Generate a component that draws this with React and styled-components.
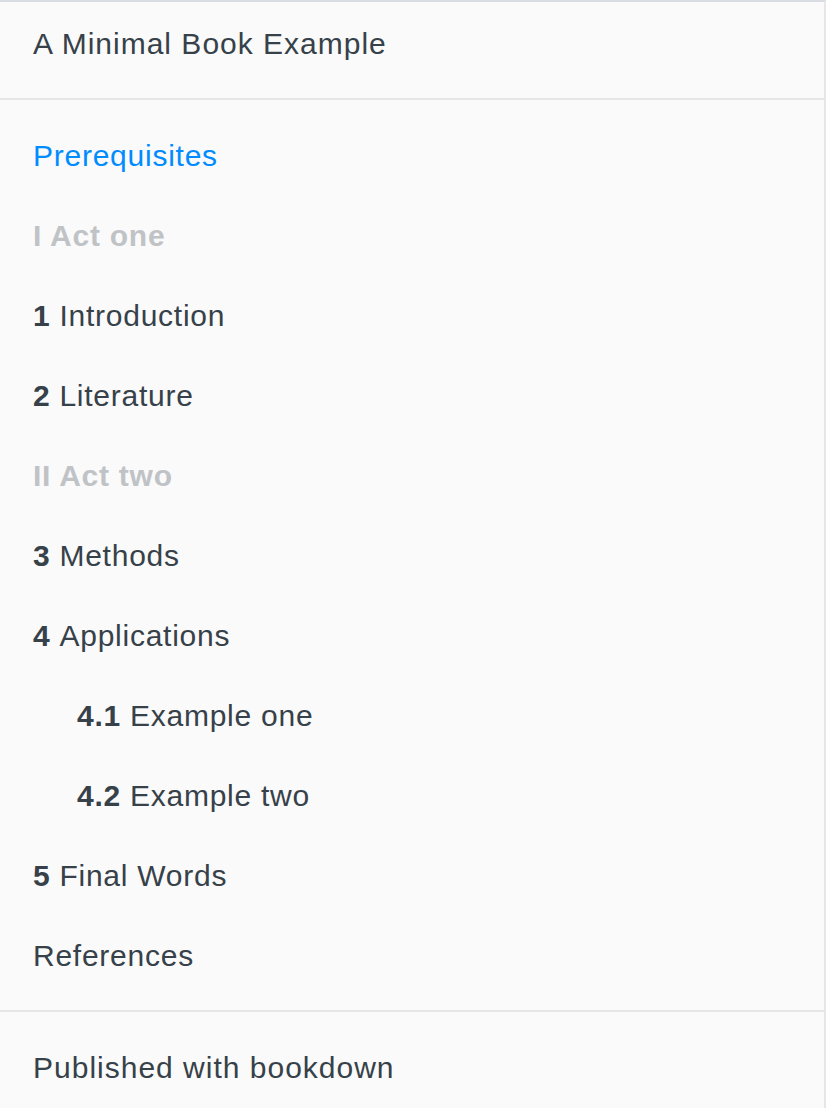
import React from "react";
import styled, { createGlobalStyle } from "styled-components";

const Global = createGlobalStyle`
  html, body { margin: 0; padding: 0; background: #fafafa; }
  body { font-family: "Liberation Sans", Arial, sans-serif; }
`;

const Sidebar = styled.nav`
  box-sizing: border-box;
  width: 826px;
  height: 1108px;
  background: #fafafa;
  border-top: 2px solid #d9dde1;
  border-right: 2px solid #e6e6e6;
  overflow: hidden;
`;

const Summary = styled.ul`
  list-style: none;
  margin: 0;
  padding: 0;
`;

const Item = styled.li`
  box-sizing: border-box;
  height: 80px;
  display: flex;
  align-items: center;
  padding-left: ${(p) => (p.$level === 2 ? 77 : 33)}px;
  padding-top: ${(p) => p.$shift || 0}px;
  font-size: 30px;
  letter-spacing: ${(p) => p.$spacing || 0.75}px;
  color: ${(p) => (p.$active ? "#008cff" : p.$part ? "#c0c3c6" : "#364149")};
  font-weight: ${(p) => (p.$part ? 700 : 400)};
  white-space: nowrap;
`;

const Num = styled.b`
  font-weight: 700;
  margin-right: 9px;
`;

const Divider = styled.li`
  height: 2px;
  margin: ${(p) => p.$margin || "16px 0"};
  background: #e6e6e6;
`;

const items = [
  { text: "Prerequisites", active: true },
  { text: "I Act one", part: true },
  { num: "1", text: "Introduction" },
  { num: "2", text: "Literature" },
  { text: "II Act two", part: true },
  { num: "3", text: "Methods" },
  { num: "4", text: "Applications" },
  { num: "4.1", text: "Example one", level: 2 },
  { num: "4.2", text: "Example two", level: 2 },
  { num: "5", text: "Final Words" },
  { text: "References" },
];

export default function App() {
  return (
    <>
      <Global />
      <Sidebar>
        <Summary>
          <Item $shift={4} $spacing={1}>A Minimal Book Example</Item>
          <Divider />
          {items.map((it, i) => (
            <Item key={i} $active={it.active} $part={it.part} $level={it.level}>
              {it.num && <Num>{it.num}</Num>}
              {it.text}
            </Item>
          ))}
          <Divider $margin="14px 0 16px" />
          <Item $spacing={1}>Published with bookdown</Item>
        </Summary>
      </Sidebar>
    </>
  );
}
